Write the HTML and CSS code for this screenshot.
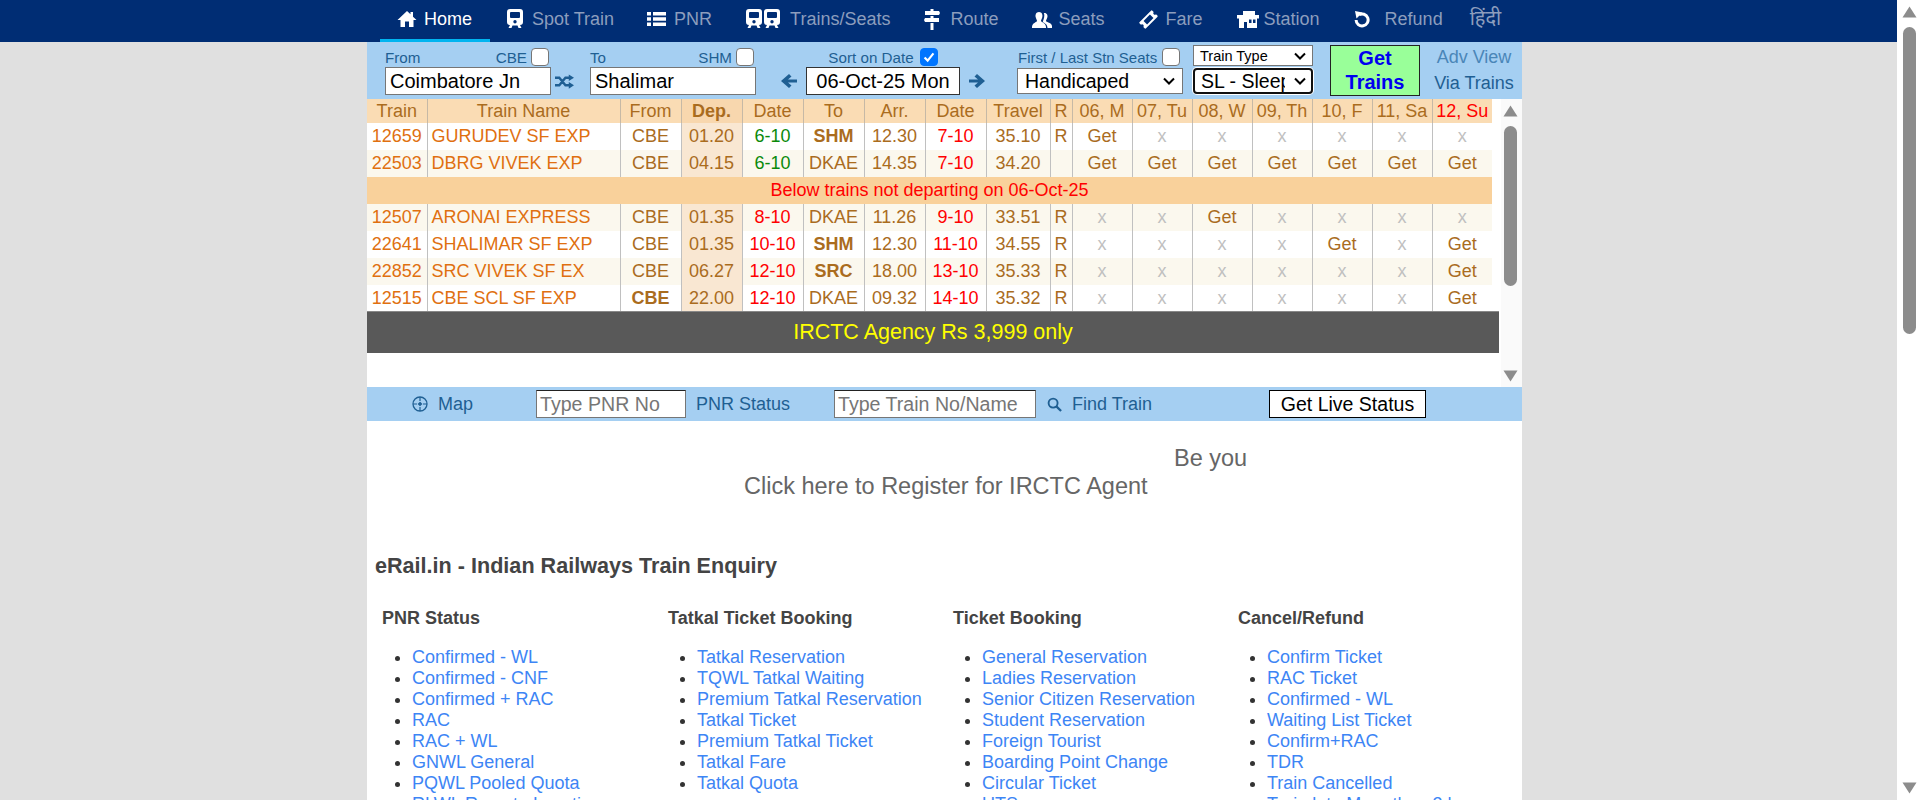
FILE: index.html
```html
<!DOCTYPE html>
<html lang="en">
<head>
<meta charset="utf-8">
<title>eRail.in - Indian Railways Train Enquiry</title>
<link rel="stylesheet" href="styles.css">
</head>
<body>
<div class="viewport">
  <div class="page">
    <nav class="nav">
      <a class="tab tab-active"><svg class="ic ic-home" viewBox="0 0 20 18"><path d="M10 1 L0.5 10 H3.5 V17 H8 V11.5 H12 V17 H16.5 V10 H19.5 L16 6.7 V2 H13.5 V4.3 Z" fill="#fff"/></svg>Home</a>
      <a class="tab"><svg class="ic ic-train" viewBox="0 0 16 20"><path fill-rule="evenodd" d="M3 0 H13 Q16 0 16 3 V13 Q16 16 13 16 L14.500 19 H11.500 L10.500 16.500 H5.500 L4.500 19 H1.500 L3 16 Q0 16 0 13 V3 Q0 0 3 0 Z M4 3 Q3 3 3 4 V8 Q3 9 4 9 H12 Q13 9 13 8 V4 Q13 3 12 3 Z M8 11 A1.700 1.700 0 1 0 8 14.400 A1.700 1.700 0 1 0 8 11 Z" fill="#fff"/></svg>Spot Train</a>
      <a class="tab"><svg class="ic ic-list" viewBox="0 0 19 16"><path d="M0 1 H4 V4.400 H0 Z M6 1 H19 V4.400 H6 Z M0 6.300 H4 V9.700 H0 Z M6 6.300 H19 V9.700 H6 Z M0 11.600 H4 V15 H0 Z M6 11.600 H19 V15 H6 Z" fill="#fff"/></svg>PNR</a>
      <a class="tab"><svg class="ic ic-trains" viewBox="0 0 34 20"><path fill-rule="evenodd" d="M3 0 H13 Q16 0 16 3 V13 Q16 16 13 16 L14.500 19 H11.500 L10.500 16.500 H5.500 L4.500 19 H1.500 L3 16 Q0 16 0 13 V3 Q0 0 3 0 Z M4 3 Q3 3 3 4 V8 Q3 9 4 9 H12 Q13 9 13 8 V4 Q13 3 12 3 Z M8 11 A1.700 1.700 0 1 0 8 14.400 A1.700 1.700 0 1 0 8 11 Z M21 0 H31 Q34 0 34 3 V13 Q34 16 31 16 L32.500 19 H29.500 L28.500 16.500 H23.500 L22.500 19 H19.500 L21 16 Q18 16 18 13 V3 Q18 0 21 0 Z M22 3 Q21 3 21 4 V8 Q21 9 22 9 H30 Q31 9 31 8 V4 Q31 3 30 3 Z M26 11 A1.700 1.700 0 1 0 26 14.400 A1.700 1.700 0 1 0 26 11 Z" fill="#fff"/></svg>Trains/Seats</a>
      <a class="tab"><svg class="ic ic-route" viewBox="0 0 16 21"><path d="M6.500 0 H9.500 V2 H15 L16 4 L15 6 H1 V2 H6.500 Z M6.500 7 H9.500 V9 H15 V13 H1 L0 11 L1 9 H6.500 Z M6.500 14 H9.500 V21 H6.500 Z" fill="#fff"/></svg>Route</a>
      <a class="tab"><svg class="ic ic-seats" viewBox="0 0 20 18"><path d="M7 2 C10 2 11 5 10.200 7.500 C9.800 9 9 10 9 11 C9 12 14 13 14 17 V18 H0 V17 C0 13 5 12 5 11 C5 10 4.200 9 3.800 7.500 C3 5 4 2 7 2 Z" fill="#fff"/><path d="M12.500 3 C15 3 16 5.500 15.300 7.500 C14.900 9 14 10 14 11 C14 12 20 13 20 16 V18 H15.500 C15.500 14 12 13 10.800 12 C11 10 12.300 9 12.300 5.500 C12.300 4.500 12.200 3.700 11.800 3.100 Z" fill="#fff"/></svg>Seats</a>
      <a class="tab"><svg class="ic ic-fare" viewBox="0 0 19 19"><g transform="rotate(-45 9.500 9.500)"><rect x="0.500" y="5" width="18" height="9" rx="1" fill="#fff"/><rect x="5" y="7" width="9" height="5" fill="#002d74"/><circle cx="0.500" cy="9.500" r="1.600" fill="#002d74"/><circle cx="18.500" cy="9.500" r="1.600" fill="#002d74"/></g></svg>Fare</a>
      <a class="tab"><svg class="ic ic-station" viewBox="0 0 22 17"><path fill-rule="evenodd" d="M6 0 H18 V4 H22 V7.500 H20 V17 H10 V11 H7 V17 H2 V7.500 H0 V4 H6 Z M12 8.500 V12 H14.500 V8.500 Z M16 8.500 V12 H18.500 V8.500 Z" fill="#fff"/></svg>Station</a>
      <a class="tab"><svg class="ic ic-refund" viewBox="0 0 16 18"><path d="M5 4.800 A6 6 0 1 1 2.100 10" fill="none" stroke="#fff" stroke-width="3"/><path d="M1 1 L8.500 2.500 L2.500 8.500 Z" fill="#fff"/></svg>Refund</a>
      <a class="tab tab-hindi">हिंदी</a>
    </nav>

    <form class="search">
      <div class="field field-station">
        <div class="lab"><span>From</span><span class="lab-end">CBE<i class="box"></i></span></div>
        <div class="input input-station">Coimbatore Jn</div>
      </div>
      <svg class="swap" viewBox="0 0 20 15"><path d="M0 3.500 H4.500 L11 11.500 H15 M0 11.500 H4.500 L11 3.500 H15" fill="none" stroke="#1f5f93" stroke-width="2.500"/><path d="M14.500 0 L20 3.500 L14.500 7 Z M14.500 8 L20 11.500 L14.500 15 Z" fill="#1f5f93"/></svg>
      <div class="field field-station">
        <div class="lab"><span>To</span><span class="lab-end">SHM<i class="box"></i></span></div>
        <div class="input input-station">Shalimar</div>
      </div>
      <div class="field field-date">
        <div class="lab lab-date">Sort on Date<i class="box box-on"><svg viewBox="0 0 18 18"><path d="M4 9.500 L7.500 13 L14 5" stroke="#fff" stroke-width="2.400" fill="none"/></svg></i></div>
        <div class="date-row">
          <svg class="arrow" viewBox="0 0 16 16"><path d="M8 1 L10.500 3.500 L7 6.500 H16 V9.500 H7 L10.500 12.500 L8 15 L0 8 Z" fill="#1f5f93"/></svg>
          <div class="input input-date">06-Oct-25 Mon</div>
          <svg class="arrow" viewBox="0 0 16 16"><path d="M8 1 L5.500 3.500 L9 6.500 H0 V9.500 H9 L5.500 12.500 L8 15 L16 8 Z" fill="#1f5f93"/></svg>
        </div>
      </div>
      <div class="field field-quota">
        <div class="lab lab-quota">First / Last Stn Seats<i class="box"></i></div>
        <div class="sel sel-quota">Handicaped<svg class="chev" viewBox="0 0 12 8"><path d="M1 1.500 L6 6.500 L11 1.500" stroke="#000" stroke-width="2" fill="none"/></svg></div>
      </div>
      <div class="field field-type">
        <div class="sel sel-small">Train Type<svg class="chev" viewBox="0 0 12 8"><path d="M1 1.500 L6 6.500 L11 1.500" stroke="#000" stroke-width="2" fill="none"/></svg></div>
        <div class="sel sel-focus"><span class="clip">SL - Sleeper</span><svg class="chev" viewBox="0 0 12 8"><path d="M1 1.500 L6 6.500 L11 1.500" stroke="#000" stroke-width="2" fill="none"/></svg></div>
      </div>
      <button type="button" class="get">Get Trains</button>
      <div class="links">
        <a class="adv">Adv View</a>
        <a class="via">Via Trains</a>
      </div>
    </form>

    <div class="scroller">
      <div class="scroll-body">
        <table class="trains">
          <colgroup>
            <col class="c-no"><col class="c-name"><col class="c-61"><col class="c-61"><col class="c-61"><col class="c-61"><col class="c-61"><col class="c-61"><col class="c-travel"><col class="c-r">
            <col class="c-60"><col class="c-60"><col class="c-60"><col class="c-60"><col class="c-60"><col class="c-60"><col class="c-60">
          </colgroup>
          <thead>
            <tr><th>Train</th><th>Train Name</th><th>From</th><th class="dep-h">Dep.</th><th>Date</th><th>To</th><th>Arr.</th><th>Date</th><th>Travel</th><th>R</th><th>06, M</th><th>07, Tu</th><th>08, W</th><th>09, Th</th><th>10, F</th><th>11, Sa</th><th class="red">12, Su</th></tr>
          </thead>
          <tbody>
            <tr><td class="no">12659</td><td class="name">GURUDEV SF EXP</td><td>CBE</td><td class="dep">01.20</td><td class="green">6-10</td><td><b>SHM</b></td><td>12.30</td><td class="red">7-10</td><td>35.10</td><td>R</td><td>Get</td><td class="x">x</td><td class="x">x</td><td class="x">x</td><td class="x">x</td><td class="x">x</td><td class="x">x</td></tr>
            <tr class="alt"><td class="no">22503</td><td class="name">DBRG VIVEK EXP</td><td>CBE</td><td class="dep">04.15</td><td class="green">6-10</td><td>DKAE</td><td>14.35</td><td class="red">7-10</td><td>34.20</td><td></td><td>Get</td><td>Get</td><td>Get</td><td>Get</td><td>Get</td><td>Get</td><td>Get</td></tr>
            <tr class="band"><td colspan="17">Below trains not departing on 06-Oct-25</td></tr>
            <tr class="alt"><td class="no">12507</td><td class="name">ARONAI EXPRESS</td><td>CBE</td><td class="dep">01.35</td><td class="red">8-10</td><td>DKAE</td><td>11.26</td><td class="red">9-10</td><td>33.51</td><td>R</td><td class="x">x</td><td class="x">x</td><td>Get</td><td class="x">x</td><td class="x">x</td><td class="x">x</td><td class="x">x</td></tr>
            <tr><td class="no">22641</td><td class="name">SHALIMAR SF EXP</td><td>CBE</td><td class="dep">01.35</td><td class="red">10-10</td><td><b>SHM</b></td><td>12.30</td><td class="red">11-10</td><td>34.55</td><td>R</td><td class="x">x</td><td class="x">x</td><td class="x">x</td><td class="x">x</td><td>Get</td><td class="x">x</td><td>Get</td></tr>
            <tr class="alt"><td class="no">22852</td><td class="name">SRC VIVEK SF EX</td><td>CBE</td><td class="dep">06.27</td><td class="red">12-10</td><td><b>SRC</b></td><td>18.00</td><td class="red">13-10</td><td>35.33</td><td>R</td><td class="x">x</td><td class="x">x</td><td class="x">x</td><td class="x">x</td><td class="x">x</td><td class="x">x</td><td>Get</td></tr>
            <tr><td class="no">12515</td><td class="name">CBE SCL SF EXP</td><td><b>CBE</b></td><td class="dep">22.00</td><td class="red">12-10</td><td>DKAE</td><td>09.32</td><td class="red">14-10</td><td>35.32</td><td>R</td><td class="x">x</td><td class="x">x</td><td class="x">x</td><td class="x">x</td><td class="x">x</td><td class="x">x</td><td>Get</td></tr>
          </tbody>
        </table>
        <div class="promo">IRCTC Agency Rs 3,999 only</div>
      </div>
      <div class="bar bar-inner">
        <svg class="bar-arrow" viewBox="0 0 15 12"><path d="M7.500 0.500 L14.500 11.500 H0.500 Z" fill="#8c8c8c"/></svg>
        <div class="thumb thumb-inner"></div>
        <svg class="bar-arrow bar-end" viewBox="0 0 15 12"><path d="M7.500 11.500 L14.500 0.500 H0.500 Z" fill="#8c8c8c"/></svg>
      </div>
    </div>

    <div class="tools">
      <a class="tool tool-map"><svg class="tool-ic" viewBox="0 0 16 16"><circle cx="8" cy="8" r="7" fill="none" stroke="#1f5f93" stroke-width="1.300"/><path d="M8 1 V5 M8 11 V15 M1 8 H5 M11 8 H15 M8 6.500 L9.500 8 L8 9.500 L6.500 8 Z" stroke="#1f5f93" stroke-width="1.200" fill="#1f5f93"/></svg>Map</a>
      <div class="tbox tbox-pnr">Type PNR No</div>
      <a class="tool tool-pnr">PNR Status</a>
      <div class="tbox tbox-train">Type Train No/Name</div>
      <a class="tool tool-find"><svg class="tool-ic ic-search" viewBox="0 0 16 16"><circle cx="6.500" cy="6.500" r="4.800" fill="none" stroke="#1f5f93" stroke-width="2"/><path d="M10 10 L15 15" stroke="#1f5f93" stroke-width="2.400"/></svg>Find Train</a>
      <button type="button" class="live">Get Live Status</button>
    </div>

    <div class="ad">
      <div class="ad-line1"><span class="ad-clip">Be you</span></div>
      <div class="ad-line2">Click here to Register for IRCTC Agent</div>
    </div>

    <section class="info">
      <h1 class="title">eRail.in - Indian Railways Train Enquiry</h1>
      <div class="cols">
        <div class="col">
          <h2 class="sub">PNR Status</h2>
          <ul class="list">
            <li><a>Confirmed - WL</a></li><li><a>Confirmed - CNF</a></li><li><a>Confirmed + RAC</a></li><li><a>RAC</a></li><li><a>RAC + WL</a></li><li><a>GNWL General</a></li><li><a>PQWL Pooled Quota</a></li><li><a>RLWL Remote Location</a></li>
          </ul>
        </div>
        <div class="col">
          <h2 class="sub">Tatkal Ticket Booking</h2>
          <ul class="list">
            <li><a>Tatkal Reservation</a></li><li><a>TQWL Tatkal Waiting</a></li><li><a>Premium Tatkal Reservation</a></li><li><a>Tatkal Ticket</a></li><li><a>Premium Tatkal Ticket</a></li><li><a>Tatkal Fare</a></li><li><a>Tatkal Quota</a></li>
          </ul>
        </div>
        <div class="col">
          <h2 class="sub">Ticket Booking</h2>
          <ul class="list">
            <li><a>General Reservation</a></li><li><a>Ladies Reservation</a></li><li><a>Senior Citizen Reservation</a></li><li><a>Student Reservation</a></li><li><a>Foreign Tourist</a></li><li><a>Boarding Point Change</a></li><li><a>Circular Ticket</a></li><li><a>UTS</a></li>
          </ul>
        </div>
        <div class="col">
          <h2 class="sub">Cancel/Refund</h2>
          <ul class="list">
            <li><a>Confirm Ticket</a></li><li><a>RAC Ticket</a></li><li><a>Confirmed - WL</a></li><li><a>Waiting List Ticket</a></li><li><a>Confirm+RAC</a></li><li><a>TDR</a></li><li><a>Train Cancelled</a></li><li><a>Train late More than 3 hrs</a></li>
          </ul>
        </div>
      </div>
    </section>
  </div>
  <div class="bar bar-page">
    <svg class="bar-arrow" viewBox="0 0 15 12"><path d="M7.500 0.500 L14.500 11.500 H0.500 Z" fill="#8c8c8c"/></svg>
    <div class="thumb thumb-page"></div>
    <svg class="bar-arrow bar-end" viewBox="0 0 15 12"><path d="M7.500 11.500 L14.500 0.500 H0.500 Z" fill="#8c8c8c"/></svg>
  </div>
</div>
</body>
</html>
```

FILE: styles.css
```css
* { box-sizing: border-box; }
html, body { margin: 0; height: 100%; overflow: hidden; }
body { font-family: "Liberation Sans", Arial, sans-serif; background: #e0e0e0; }
a { text-decoration: none; }

.viewport { display: flex; width: 1920px; height: 800px; overflow: hidden; }
.page { width: 1897px; height: 800px; overflow: hidden; flex: none; }

/* fake scrollbars */
.bar { flex: none; background: #fff; display: flex; flex-direction: column; align-items: center; }
.bar-arrow { width: 15px; height: 12px; flex: none; }
.bar-end { margin-top: auto; }
.thumb { width: 13px; background: #8c8c8c; border-radius: 7px; flex: none; }
.bar-page { width: 23px; padding: 6px 3px 6px 4px; }
.thumb-page { height: 307px; margin-top: 9px; }
.bar-inner { width: 21px; background: #fafafa; padding: 6px 4px 5px 2px; }
.thumb-inner { height: 160px; margin-top: 9px; }

/* nav */
.nav { display: flex; height: 42px; background: #002d74; padding-left: 380px; }
.tab { display: flex; align-items: center; padding: 0 17px 4px; color: #8c9dbd; font-size: 18px; height: 42px; white-space: nowrap; flex: none; }
.tab-active { color: #fff; border-bottom: 3px solid #00b4f0; padding: 0 18px 1px 17px; }
.tab-hindi { font-family: "Noto Sans", "Liberation Sans", sans-serif; font-size: 20px; padding-bottom: 8px; margin-left: -7px; }
.ic { flex: none; display: block; }
.ic-home { width: 20px; height: 18px; margin-right: 7px; }
.ic-train { width: 16px; height: 20px; margin-right: 9px; }
.ic-list { width: 19px; height: 16px; margin: 0 8px 0 -1px; }
.ic-trains { width: 34px; height: 20px; margin-right: 10px; }
.ic-route { width: 16px; height: 21px; margin-right: 10px; }
.ic-seats { width: 20px; height: 18px; margin: 0 7px 0 -1px; }
.ic-fare { width: 19px; height: 19px; margin-right: 8px; }
.ic-station { width: 22px; height: 17px; margin-right: 5px; }
.ic-refund { width: 16px; height: 18px; margin: 0 15px 0 0; }

/* search */
.search { display: flex; margin-left: 367px; width: 1155px; height: 57px; background: #a5cff2; padding: 3px 0 0 18px; color: #1f5f93; font-size: 15.200px; }
.field { display: flex; flex-direction: column; flex: none; }
.field-station { width: 166px; }
.lab { display: flex; justify-content: space-between; align-items: center; height: 22px; padding: 2px 2px 0 0; }
.lab-end { display: flex; align-items: center; gap: 4px; }
.box { display: block; width: 18px; height: 18px; background: #fff; border: 1px solid #767676; border-radius: 4px; flex: none; }
.box-on { background: #0075ff; border-color: #0075ff; margin-left: 6px; }
.box-on svg { display: block; width: 16px; height: 16px; }
.input { background: #fff; border: 1px solid #767676; color: #000; font-size: 20px; height: 28px; line-height: 26px; white-space: nowrap; }
.input-station { padding-left: 4px; }
.swap { width: 19px; height: 15px; flex: none; margin: 29px 16px 0 4px; }
.field-date { width: 204px; margin-left: 25px; }
.lab-date { justify-content: center; padding: 2px 0 0; }
.date-row { display: flex; align-items: center; height: 28px; }
.arrow { width: 16px; height: 16px; flex: none; }
.input-date { width: 154px; margin: 0 9px; text-align: center; border-color: #333; }
.field-quota { width: 166px; margin-left: 32px; }
.lab-quota { padding: 2px 3px 0 1px; font-size: 15px; }
.sel { display: flex; align-items: center; justify-content: space-between; background: #fff; border: 1px solid #767676; color: #000; white-space: nowrap; }
.sel-quota { height: 26px; font-size: 19.500px; margin-top: 1px; padding: 0 7px; }
.chev { width: 12px; height: 8px; flex: none; }
.field-type { width: 120px; margin-left: 10px; }
.sel-small { height: 21px; font-size: 14.500px; padding: 0 6px; }
.sel-focus { height: 26px; font-size: 19.500px; margin-top: 2px; padding: 0 5px 0 6px; border: 2px solid #101010; border-radius: 4px; box-shadow: 0 0 0 1px #fff; }
.clip { width: 84px; overflow: hidden; }
.get { width: 90px; height: 51px; flex: none; margin-left: 17px; padding: 0 8px 2px; background: #99ff99; border: 1px solid #222; color: #0000f0; font: bold 20px/24px "Liberation Sans", Arial, sans-serif; }
.links { display: flex; flex-direction: column; align-items: center; width: 102px; flex: none; margin: -1px 0 0 3px; font-size: 18px; line-height: 26px; }
.adv { color: #4a86b8; }
.via { color: #1f5f93; }

/* table panel */
.scroller { display: flex; margin-left: 367px; width: 1155px; height: 288px; background: #fff; }
.scroll-body { width: 1134px; flex: none; }
.trains { border-collapse: collapse; table-layout: fixed; width: 1125px; font-size: 18px; color: #aa6c1e; background: #fff; }
.c-no { width: 60px; } .c-name { width: 193px; } .c-61 { width: 61px; } .c-travel { width: 64px; } .c-r { width: 22px; } .c-60 { width: 60px; }
.trains th, .trains td { padding: 0; text-align: center; overflow: hidden; white-space: nowrap; border-right: 1px solid #c0c0c0; height: 27px; font-weight: normal; }
.trains th { height: 24px; background: #fadcb4; border-right-color: #c6b9a6; }
.trains th.dep-h { background: #f8d7ae; font-weight: bold; }
.trains th:last-child, .trains td:last-child { border-right: 0; }
.trains b { font-weight: bold; }
.trains tbody tr:last-child td { height: 26px; line-height: 24px; }
.alt td { background: #fbf8ee; }
.trains td.no, .trains td.name { color: #e07010; }
.trains td.name { text-align: left; padding-left: 4px; }
.trains td.dep { background: #f9e7d2; }
.trains .green { color: #0a8a0a; }
.trains .red { color: #ff0000; }
.trains td.x { color: #c0c0c0; }
.band td { background: #f9d19b; color: #ff0000; border-right: 0; }
.promo { width: 1132px; height: 42px; background: #595959; color: #ffff00; font-size: 21.500px; line-height: 40px; text-align: center; border-top: 1px solid #888; }

/* tools */
.tools { display: flex; align-items: center; margin-left: 367px; width: 1155px; height: 34px; background: #a5cff2; color: #1f5f93; font-size: 18px; padding-left: 45px; }
.tool { display: flex; align-items: center; color: #1f5f93; white-space: nowrap; flex: none; }
.tool-ic { width: 16px; height: 16px; flex: none; }
.tool-map .tool-ic { margin-right: 10px; }
.tool-map { width: 124px; }
.tbox { background: #fff; border: 1px solid #767676; border-top-color: #222; color: #767676; height: 28px; line-height: 26px; font-size: 19.600px; padding-left: 3px; white-space: nowrap; overflow: hidden; flex: none; }
.tbox-pnr { width: 150px; }
.tool-pnr { margin-left: 10px; width: 138px; }
.tbox-train { width: 202px; }
.tool-find { margin-left: 11px; width: 222px; }
.ic-search { margin-right: 10px; width: 15px; height: 15px; }
.live { width: 157px; height: 28px; flex: none; padding: 0; background: #fff; border: 1px solid #000; color: #000; font: 19.500px "Liberation Sans", Arial, sans-serif; }

/* ad */
.ad { margin-left: 367px; width: 1155px; height: 131px; background: #fff; color: #666; font-size: 23.500px; padding-top: 23px; }
.ad-line1 { height: 26px; line-height: 28px; padding-left: 807px; white-space: nowrap; }
.ad-line2 { padding-left: 377px; line-height: 33px; }

/* info */
.info { margin-left: 367px; width: 1155px; min-height: 300px; background: #fff; padding: 0 0 0 8px; color: #444; }
.title { margin: 0; font-size: 21.600px; line-height: 28px; font-weight: bold; }
.cols { display: grid; grid-template-columns: repeat(4, 285px); padding-left: 7px; margin-top: 27px; }
.sub { margin: 0; font-size: 18px; line-height: 22px; font-weight: bold; }
.col + .col .sub { padding-left: 1px; }
.list { margin: 18px 0 0; padding-left: 30px; font-size: 18px; line-height: 21px; color: #333; }
.list a { color: #3d85f5; }
```
